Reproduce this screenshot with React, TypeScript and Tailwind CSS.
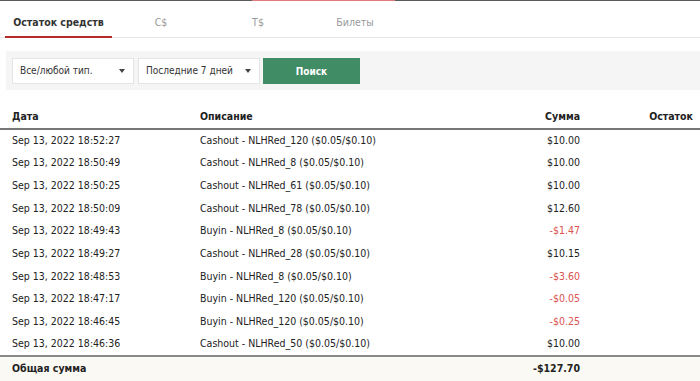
const rows = [
  { date: "Sep 13, 2022 18:52:27", desc: "Cashout - NLHRed_120 ($0.05/$0.10)", sum: "$10.00" },
  { date: "Sep 13, 2022 18:50:49", desc: "Cashout - NLHRed_8 ($0.05/$0.10)", sum: "$10.00" },
  { date: "Sep 13, 2022 18:50:25", desc: "Cashout - NLHRed_61 ($0.05/$0.10)", sum: "$10.00" },
  { date: "Sep 13, 2022 18:50:09", desc: "Cashout - NLHRed_78 ($0.05/$0.10)", sum: "$12.60" },
  { date: "Sep 13, 2022 18:49:43", desc: "Buyin - NLHRed_8 ($0.05/$0.10)", sum: "-$1.47" },
  { date: "Sep 13, 2022 18:49:27", desc: "Cashout - NLHRed_28 ($0.05/$0.10)", sum: "$10.15" },
  { date: "Sep 13, 2022 18:48:53", desc: "Buyin - NLHRed_8 ($0.05/$0.10)", sum: "-$3.60" },
  { date: "Sep 13, 2022 18:47:17", desc: "Buyin - NLHRed_120 ($0.05/$0.10)", sum: "-$0.05" },
  { date: "Sep 13, 2022 18:46:45", desc: "Buyin - NLHRed_120 ($0.05/$0.10)", sum: "-$0.25" },
  { date: "Sep 13, 2022 18:46:36", desc: "Cashout - NLHRed_50 ($0.05/$0.10)", sum: "$10.00" },
];

const font = { fontFamily: '"DejaVu Sans Condensed", "DejaVu Sans", sans-serif' };

function Select({ label }: { label: string }) {
  return (
    <div className="w-[122px] h-[26px] bg-white border border-[#e4e4e4] flex items-center justify-between pl-[7px] pr-[8px] text-[10px] text-[#333]">
      <span>{label}</span>
      <span className="w-0 h-0 border-l-[3px] border-r-[3px] border-t-[4px] border-l-transparent border-r-transparent border-t-[#444]"></span>
    </div>
  );
}

export default function App() {
  return (
    <div className="w-[700px] h-[381px] bg-white overflow-hidden text-[#222]" style={font}>
      {/* top strip */}
      <div className="h-[1px] bg-[#5a5a5a] flex">
        <div className="ml-[252px] w-[143px] bg-[#e07b7b]"></div>
      </div>

      {/* tabs */}
      <div className="flex h-[37px] border-b border-[#e6e6e6] pl-[5px] leading-none">
        <div className="w-[107px] flex items-end justify-center pb-[9px] text-[10.5px] font-bold text-[#333] border-b-2 border-[#b52a2a] -mb-[1px]">
          Остаток средств
        </div>
        <div className="w-[98px] flex items-end justify-center pb-[10px] text-[10.5px] text-[#9a9a9a]">C$</div>
        <div className="w-[96px] flex items-end justify-center pb-[10px] text-[10.5px] text-[#9a9a9a]">T$</div>
        <div className="w-[98px] flex items-end justify-center pb-[10px] text-[10.5px] text-[#9a9a9a]">Билеты</div>
      </div>

      {/* filters */}
      <div className="ml-[6px] mt-[13px] h-[39px] bg-[#f5f5f5] flex items-center gap-[4px] pl-[6px]">
        <Select label="Все/любой тип." />
        <Select label="Последние 7 дней" />
        <button className="w-[97px] h-[26px] ml-[-1px] mt-[1px] bg-[#3f8c65] text-white text-[10px] font-semibold">Поиск</button>
      </div>

      {/* table */}
      <table className="w-[700px] table-fixed border-collapse mt-[15px] text-[10.5px]">
        <colgroup>
          <col className="w-[193px]" />
          <col className="w-[274px]" />
          <col className="w-[120px]" />
          <col className="w-[113px]" />
        </colgroup>
        <thead>
          <tr className="h-[24px] border-b-2 border-[#777]">
            <th className="text-left font-bold pl-[12px]">Дата</th>
            <th className="text-left font-bold pl-[7px]">Описание</th>
            <th className="text-right font-bold pr-[7px]">Сумма</th>
            <th className="text-right font-bold pr-[7px]">Остаток</th>
          </tr>
        </thead>
        <tbody>
          {rows.map((r) => (
            <tr key={r.date} className="h-[22.7px]">
              <td className="pl-[12px]">{r.date}</td>
              <td className="pl-[7px]">{r.desc}</td>
              <td className={"text-right pr-[7px] " + (r.sum.startsWith("-") ? "text-[#d9534f]" : "")}>{r.sum}</td>
              <td></td>
            </tr>
          ))}
          <tr className="h-[26px] bg-[#fbf9f3] border-t-2 border-b-2 border-[#8a8a8a]">
            <td className="pl-[12px] font-bold">Общая сумма</td>
            <td></td>
            <td className="text-right pr-[7px] font-bold">-$127.70</td>
            <td></td>
          </tr>
        </tbody>
      </table>
    </div>
  );
}
